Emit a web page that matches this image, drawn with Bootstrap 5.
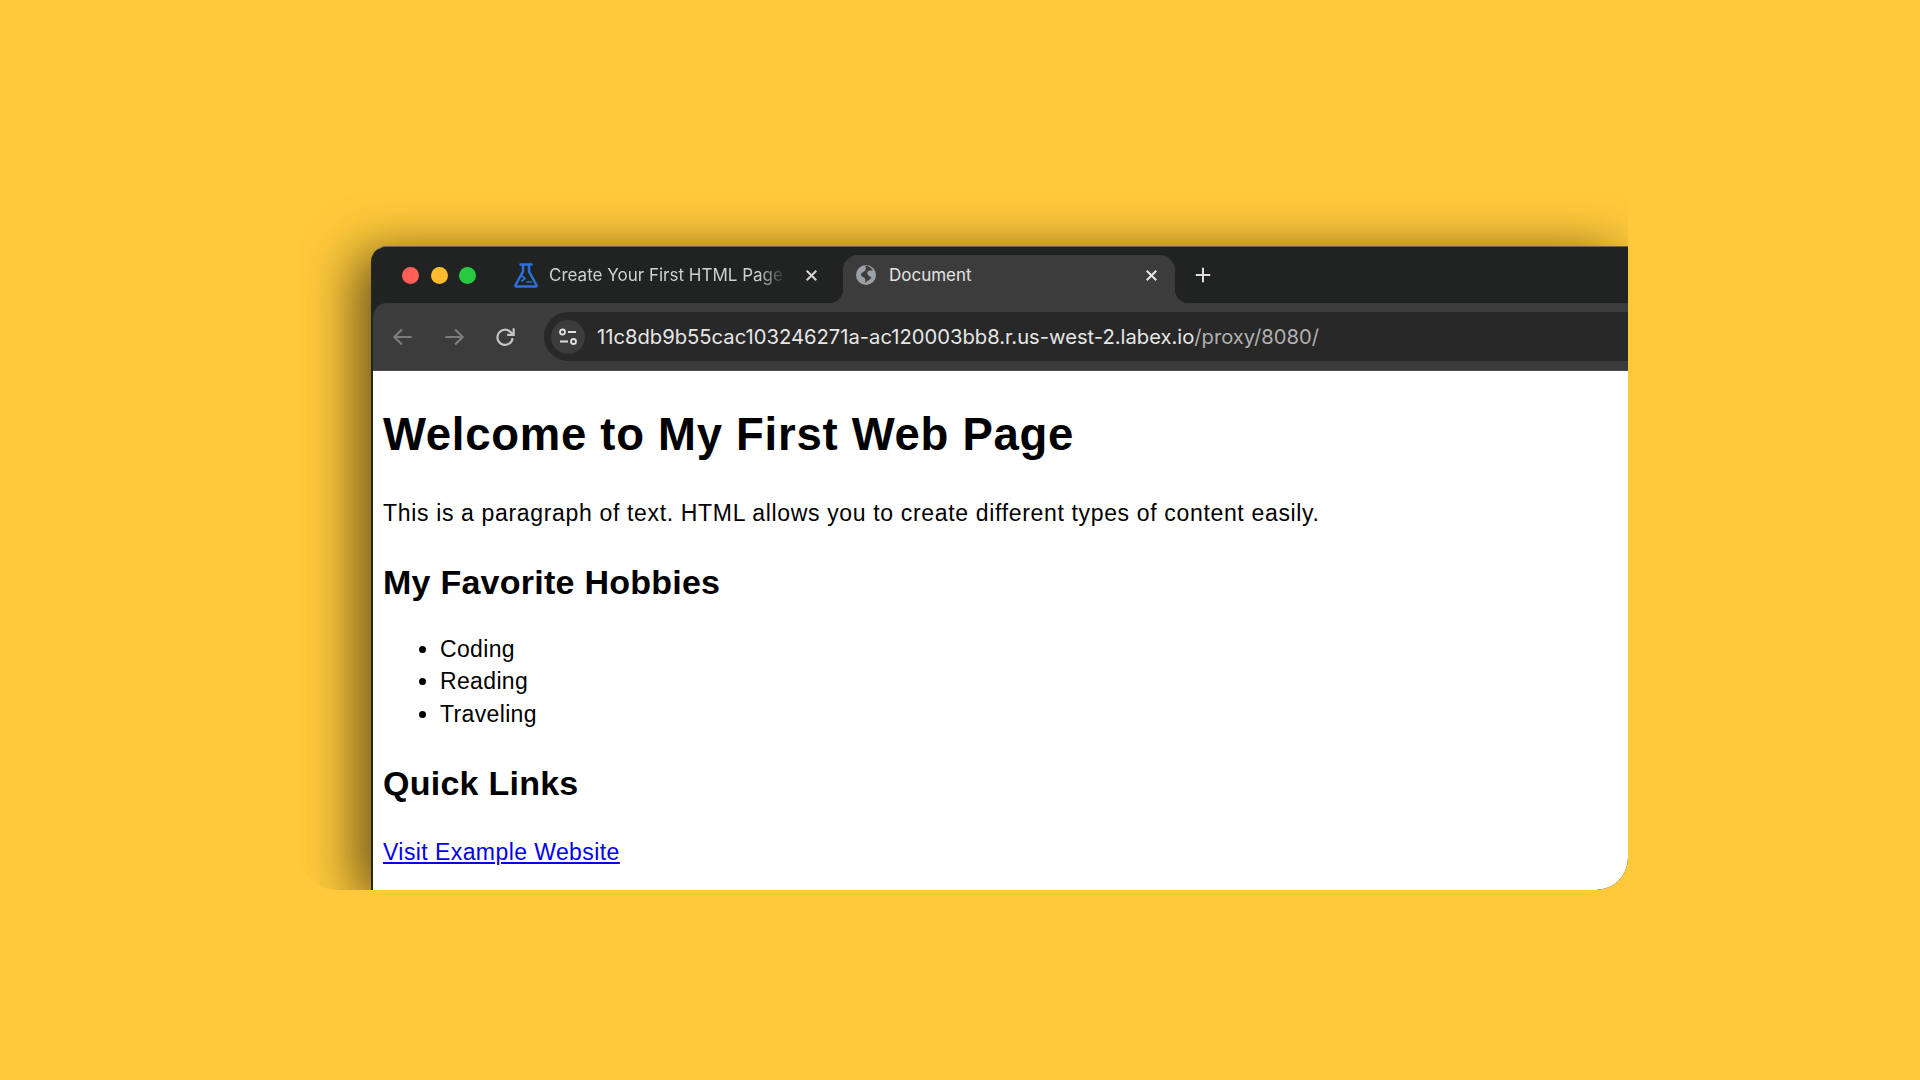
<!doctype html>
<html lang="en">
<head>
<meta charset="utf-8">
<title>Document</title>
<link href="https://cdn.jsdelivr.net/npm/bootstrap@5.3.0/dist/css/bootstrap.min.css" rel="stylesheet">
<style>
html,body{height:100%}
body{background:#fec93b;overflow:hidden;font-family:"Liberation Sans",Arial,sans-serif}
.stage{width:1328px;height:720px;margin:170px 0 0 300px;padding:76px 0 0 71px;overflow:hidden;border-radius:0 0 32px 36px}
.browser{height:644px;border-left:2px solid #26241f;border-top:1px solid #6b6650;border-top-left-radius:16px;border-bottom-right-radius:32px;overflow:hidden;background:#202322;box-shadow:-14px 8px 52px 1px rgba(0,0,0,.58)}
.tabstrip{height:56px;background:#202322;padding:8px 0 0 29px;color:#cfd0d0;font:17px Inter,"Liberation Sans",sans-serif}
.lights{gap:11.5px;width:102px;padding-bottom:8px}
.dot{width:17px;height:17px;border-radius:50%}
.tab-a{width:324px;height:48px;padding:0 0 8px 10px}
.tab-title{width:233px;margin-left:11px;white-space:nowrap;overflow:hidden;-webkit-mask-image:linear-gradient(90deg,#000 90%,rgba(0,0,0,.15) 100%);mask-image:linear-gradient(90deg,#000 90%,rgba(0,0,0,.15) 100%)}
.closer{width:17px;height:17px}
.tab-b{width:332px;height:48px;background:#3c3c3c;border-radius:15px 15px 0 0;padding:0 15px 8px 13px;position:relative;margin-left:15px;color:#e2e2e2}
.tab-b::before,.tab-b::after{content:"";position:absolute;bottom:0;width:14px;height:14px}
.tab-b::before{left:-14px;background:radial-gradient(circle at 0 0,transparent 14px,#3c3c3c 14.5px)}
.tab-b::after{right:-14px;background:radial-gradient(circle at 100% 0,transparent 14px,#3c3c3c 14.5px)}
.tab-b .tab-title{margin-left:13px;-webkit-mask-image:none;mask-image:none;flex:1 1 auto}
.plus{margin-left:10px;padding-bottom:8px}
.toolbar{height:68px;background:#3c3c3c;border-top-left-radius:14px;padding-left:17px;border-bottom:1px solid #4a4a4a}
.navbtn{width:26px;height:26px;margin-right:25px}
.addr{flex:1 1 auto;height:49px;margin-left:1px;background:#282828;border-radius:25px 0 0 25px;padding-left:7px;color:#e6e6e6;font:20.2px Inter,"Liberation Sans",sans-serif;white-space:nowrap}
.addr .dim{color:#b0b0b0}
.tune{width:34px;height:34px;border-radius:50%;background:#3c3c3c;margin-right:12px}
.pagebody{padding:0 0 0 10px;color:#000;font-size:23px;line-height:32px;background:#fff}
.pagebody h1{font-size:45.5px;font-weight:700;line-height:56px;margin:36px 0 0;letter-spacing:.72px}
.pagebody p{margin:0;letter-spacing:.66px}
.para{margin-top:34px!important}
.pagebody h2{font-size:34px;font-weight:700;line-height:42px;margin:32px 0 0;letter-spacing:.25px}
.pagebody ul{margin:30px 0 4px;padding-left:57px;list-style:disc;line-height:32.300px;letter-spacing:.35px}
.pagebody p.linkrow{margin-top:32px;letter-spacing:.42px}
.pagebody a{color:#0000ee;text-decoration:underline}
</style>
</head>
<body>
<div class="stage">
  <div class="browser d-flex flex-column">
    <div class="tabstrip d-flex align-items-center">
      <div class="lights d-flex align-items-center flex-shrink-0">
        <span class="dot" style="background:#ff5f57"></span><span class="dot" style="background:#febc2e"></span><span class="dot" style="background:#28c840"></span>
      </div>
      <div class="tab-a d-flex align-items-center flex-shrink-0">
        <svg width="24" height="25" viewBox="0 0 24 25" fill="none" stroke="#2a72e0" stroke-width="2.500" stroke-linejoin="round" stroke-linecap="round"><path d="M6.500 1.500h11M9 1.500v7L1.600 22a1 1 0 0 0 .9 1.500h19a1 1 0 0 0 .9-1.500L15 8.500v-7"/><path d="M8 13l3 2.500-3 2.500M13 19h4" stroke-width="1.700"/></svg>
        <div class="tab-title">Create Your First HTML Page</div>
        <svg class="closer ms-auto me-2" viewBox="0 0 16 16" stroke="#d5d5d5" stroke-width="1.900" fill="none"><path d="M3.500 3.500l9 9M12.500 3.500l-9 9"/></svg>
      </div>
      <div class="tab-b d-flex align-items-center flex-shrink-0">
        <svg width="20" height="20" viewBox="0 0 20 20"><circle cx="10" cy="10" r="10" fill="#9aa0a6"/><path d="M9 .5C11 4 9 6.500 6.500 7.500 4.500 8.500 4.500 11 7 12c2.500 1 3 3 1.500 7.500C9.500 16 14 15 15.500 12.500 13 11 10.500 9.500 11.500 7 12.500 5 15.500 5.500 17 5.500 15 2.500 12.500 1 9 .5z" fill="#3c3c3c"/></svg>
        <div class="tab-title">Document</div>
        <svg class="closer flex-shrink-0" viewBox="0 0 16 16" stroke="#e5e5e5" stroke-width="1.900" fill="none"><path d="M3.500 3.500l9 9M12.500 3.500l-9 9"/></svg>
      </div>
      <svg class="plus" width="36" height="34" viewBox="0 0 18 18" stroke="#dcdcdc" stroke-width="1.400" fill="none"><path d="M9 4v10M4 9h10"/></svg>
    </div>
    <div class="toolbar d-flex align-items-center flex-shrink-0">
      <svg class="navbtn" viewBox="0 0 24 24" stroke="#7c7c7c" stroke-width="2" fill="none"><path d="M20 12H4M11 5l-7 7 7 7"/></svg>
      <svg class="navbtn" viewBox="0 0 24 24" stroke="#7c7c7c" stroke-width="2" fill="none"><path d="M4 12h16M13 5l7 7-7 7"/></svg>
      <svg class="navbtn" viewBox="0 0 24 24" stroke="#c4c4c4" stroke-width="2" fill="none"><path d="M19 13a7 7 0 1 1-2-5.700L20 10"/><path d="M20 4v6h-6"/></svg>
      <div class="addr d-flex align-items-center">
        <div class="tune d-flex align-items-center justify-content-center flex-shrink-0">
          <svg width="20" height="20" viewBox="0 0 20 20" stroke="#e0e0e0" stroke-width="1.800" fill="none"><circle cx="4.500" cy="5" r="2.500"/><path d="M10 5h8M2 14.500h8"/><circle cx="15.500" cy="14.500" r="2.500"/></svg>
        </div>
        <span>11c8db9b55cac103246271a-ac120003bb8.r.us-west-2.labex.io<span class="dim">/proxy/8080/</span></span>
      </div>
    </div>
    <div class="pagebody flex-grow-1">
      <h1>Welcome to My First Web Page</h1>
      <p class="para">This is a paragraph of text. HTML allows you to create different types of content easily.</p>
      <h2>My Favorite Hobbies</h2>
      <ul><li>Coding</li><li>Reading</li><li>Traveling</li></ul>
      <h2>Quick Links</h2>
      <p class="linkrow"><a href="#">Visit Example Website</a></p>
    </div>
  </div>
</div>
<script src="https://cdn.jsdelivr.net/npm/bootstrap@5.3.0/dist/js/bootstrap.bundle.min.js"></script>
</body>
</html>
